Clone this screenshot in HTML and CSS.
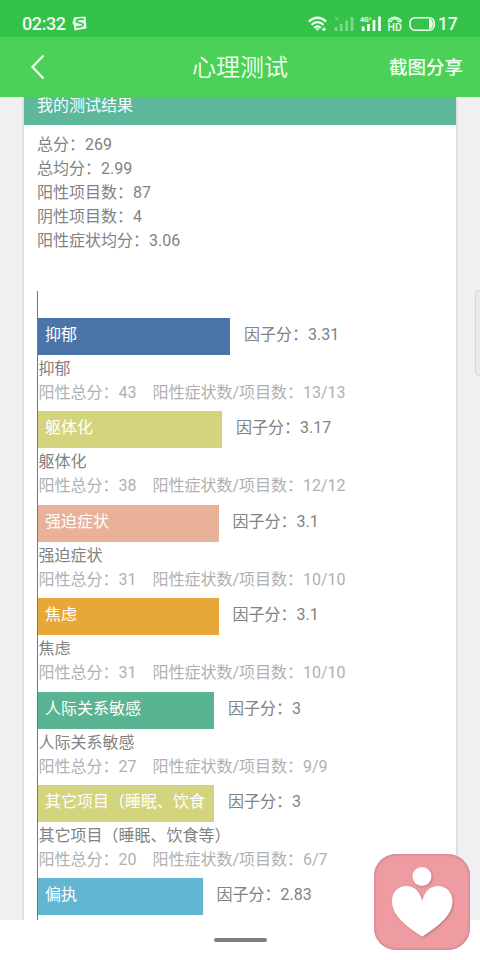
FILE: index.html
```html
<!DOCTYPE html>
<html lang="zh-CN">
<head>
<meta charset="utf-8">
<title>心理测试</title>
<link rel="stylesheet" href="styles.css">
</head>
<body>
<div class="status">
  <span class="clock">02:32</span>
  <svg class="sogou" width="15" height="15" viewBox="0 0 15 15"><path d="M2 1.200 13.500.4 14.500 12.500 2.500 14.500 1.800 9 .5 7.500Z" fill="#e9fbe9"/><path d="M12 3.300C8 2.800 4.300 3.400 4.400 5.400c.1 2 6.700.6 6.700 3.200 0 2-4 2.700-7.100 2.300" fill="none" stroke="#35c24b" stroke-width="1.700"/></svg>
  <svg class="signals" width="127" height="18" viewBox="0 0 127 18">
    <g fill="none" stroke="#effcef" stroke-width="2.300">
      <path d="M.8 6.600Q9.500-1 18.200 6.600"/><path d="M3.500 9.800Q9.500 4.400 15.500 9.800"/><path d="M6.200 12.800Q9.500 10 12.800 12.800"/>
    </g>
    <path d="M7.300 13.600h4.400L9.500 16Z" fill="#effcef"/>
    <path d="M14 14.300h4M16 12.300v4" stroke="#effcef" stroke-width="1.200"/>
    <g stroke="#7cdb85" stroke-width="2.800"><path d="M28 12v4M33.300 9v7M38.700 5.500V16M44 2v14"/><path d="m27 2 3.500 3.500M30.500 2 27 5.500" stroke-width="1"/></g>
    <path d="M55.200 11.500V16M60.500 9v7M66 5v11M71.500 1.500V16" stroke="#effcef" stroke-width="2.800"/>
    <text x="52" y="6.500" class="net">4G⁺</text>
    <path d="M80.500 6.500V5Q86.500-.5 93 5v1.500h-3V5.200Q86.500 2.700 83.500 5.200v1.300Z" fill="none" stroke="#effcef" stroke-width="1.300"/>
    <text x="79.500" y="16" class="hd">HD</text>
    <rect x="102" y="2.700" width="24.200" height="12.500" rx="5" fill="none" stroke="#effcef" stroke-width="1.600"/>
    <path d="M121.500 4.500q2.800 0 2.800 4.500t-2.800 4.500Z" fill="#effcef" stroke="#effcef"/>
  </svg>
  <span class="battery">17</span>
</div>
<header class="nav">
  <svg width="16" height="28" viewBox="0 0 16 28"><path d="M13.500 2.500 2.500 14l11 11.500" fill="none" stroke="#f3fff3" stroke-width="2.200"/></svg>
  <h1>心理测试</h1>
  <span class="share">截图分享</span>
</header>
<main class="viewport">
  <section class="card">
    <h2>我的测试结果</h2>
    <div class="summary">
      <p>总分：269</p><p>总均分：2.99</p><p>阳性项目数：87</p><p>阴性项目数：4</p><p>阳性症状均分：3.06</p>
    </div>
    <div class="chart">
      <article><div class="row"><div class="bar blue" style="width:192px">抑郁</div><span>因子分：3.31</span></div><p>抑郁</p><p class="detail"><span>阳性总分：43</span><span>阳性症状数/项目数：13/13</span></p></article>
      <article><div class="row"><div class="bar lime" style="width:184px">躯体化</div><span>因子分：3.17</span></div><p>躯体化</p><p class="detail"><span>阳性总分：38</span><span>阳性症状数/项目数：12/12</span></p></article>
      <article><div class="row"><div class="bar salmon" style="width:180.500px">强迫症状</div><span>因子分：3.1</span></div><p>强迫症状</p><p class="detail"><span>阳性总分：31</span><span>阳性症状数/项目数：10/10</span></p></article>
      <article><div class="row"><div class="bar orange" style="width:180.500px">焦虑</div><span>因子分：3.1</span></div><p>焦虑</p><p class="detail"><span>阳性总分：31</span><span>阳性症状数/项目数：10/10</span></p></article>
      <article><div class="row"><div class="bar green" style="width:176px">人际关系敏感</div><span>因子分：3</span></div><p>人际关系敏感</p><p class="detail"><span>阳性总分：27</span><span>阳性症状数/项目数：9/9</span></p></article>
      <article><div class="row"><div class="bar lime" style="width:176px">其它项目（睡眠、饮食</div><span>因子分：3</span></div><p>其它项目（睡眠、饮食等）</p><p class="detail"><span>阳性总分：20</span><span>阳性症状数/项目数：6/7</span></p></article>
      <article><div class="row"><div class="bar sky" style="width:164.500px">偏执</div><span>因子分：2.83</span></div></article>
    </div>
  </section>
  <div class="handle"></div>
</main>
<footer class="gesture"><div class="pill"></div></footer>
<div class="float">
  <svg width="96" height="96" viewBox="0 0 96 96"><g fill="#fff"><circle cx="48" cy="22.500" r="9.500"/><path d="M48.300 47C46 37 40 32 32.500 32 24 32 18 38.500 18 47c0 15 14 25 30.300 35.700C64 72 78.500 62 78.500 47c0-8.500-6-15-14.500-15-7.500 0-13.500 5-15.700 15Z"/></g></svg>
</div>
</body>
</html>
```
FILE: styles.css
```css
* { box-sizing: border-box; margin: 0; padding: 0; }
body {
  width: 480px; height: 960px; overflow: hidden; position: relative;
  display: flex; flex-direction: column; background: #fff;
  font: 400 16px/24px Roboto, "Noto Sans CJK SC", sans-serif; color: #828282;
}
.status { flex: 0 0 37px; background: #35c24b; color: #effcef; display: flex; align-items: center; padding: 10px 0 0 22px; }
.clock { font-size: 18px; font-weight: 500; width: 44px; letter-spacing: -.4px; white-space: nowrap; }
.sogou { margin-left: 6px; }
.signals { margin-left: 221px; }
.net { font: 700 7px Roboto, sans-serif; fill: #effcef; }
.hd { font: 500 10.500px Roboto, sans-serif; fill: #effcef; }
.battery { font-size: 17.500px; font-weight: 500; margin-left: 3px; letter-spacing: -.3px; }
.nav { flex: 0 0 60px; background: #4bd157; color: #f3fff3; display: grid; grid-template-columns: 162px 1fr auto; align-items: center; padding: 2px 17px 0 30px; }
.nav > svg { margin-top: -2px; }
.nav h1 { font-size: 24px; font-weight: 350; line-height: 32px; }
.share { font-size: 18.500px; font-weight: 500; }
.viewport { flex: 0 0 823px; overflow: hidden; background: #f0f0f2; position: relative; padding: 0 24px; }
.card { background: #fff; height: 900px; box-shadow: 0 0 3px #bbb; }
.card h2 { height: 28px; background: #5cb79b; color: #f3fffb; font-size: 16px; font-weight: 400; line-height: 17px; padding-left: 13px; }
.summary { padding: 8px 0 0 13px; height: 166px; }
.chart { margin-left: 13px; border-left: 1px solid #777; padding-top: 27px; height: 700px; }
article { height: 93.400px; }
article > p { padding-left: .4px; }
.row { display: flex; gap: 14px; line-height: 33px; height: 39px; }
.bar { height: 37px; padding-left: 7px; color: #fff; white-space: nowrap; overflow: hidden; }
.blue { background: #4b74a9; }
.lime { background: #d3d47d; }
.salmon { background: #e9b198; }
.orange { background: #e8a838; }
.green { background: #59b492; }
.sky { background: #62b6d1; }
.detail { color: #b0b0b0; display: flex; gap: 16px; }
.handle { position: absolute; right: -5px; top: 193px; width: 10px; height: 86px; border: 1px solid #d5d5d5; border-radius: 4px; background: #ebebec; }
.gesture { flex: 1; background: #fff; display: flex; justify-content: center; padding-top: 18px; }
.pill { width: 53px; height: 4px; border-radius: 2px; background: #7f7f7f; }
.float { position: absolute; left: 374px; top: 854px; width: 96px; height: 96px; border-radius: 22px; background: #ee9ba1; box-shadow: inset 0 0 3px #a86f73; }
.float svg { display: block; filter: drop-shadow(1px 1px 1px #b8767b); }
```
